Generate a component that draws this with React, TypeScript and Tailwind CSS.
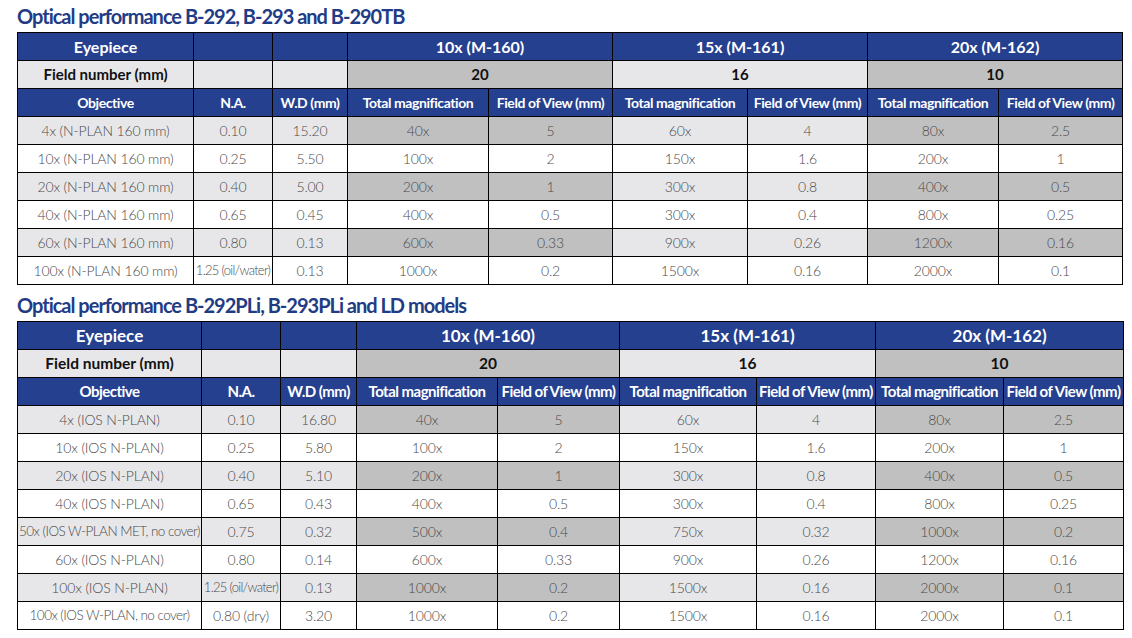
import React from "react";

type DataRow = {
  objective: string;
  na: string;
  wd: string;
  values: string[];
  shaded: boolean;
};

interface PerfTableProps {
  title: string;
  widths: number[];
  rows: DataRow[];
  big?: boolean;
}

const LIGHT = "bg-[#e7e7e9]";
const DARK = "bg-[#c0c0c0]";

const eyepieces = ["10x (M-160)", "15x (M-161)", "20x (M-162)"];
const fieldNumbers = ["20", "16", "10"];

// column shading in a shaded row: 3 lead columns light, then dark/light/dark pairs
const shadeFor = (col: number) => {
  if (col < 3) return LIGHT;
  if (col < 5) return DARK;
  if (col < 7) return LIGHT;
  return DARK;
};

// long texts are squeezed to fit their cell, as in the printed sheet
const sizeFor = (text: string) => {
  if (text.includes("oil/water")) return "text-[13px] tracking-[-0.055em]";
  if (text.length > 24) return "text-[13.5px] tracking-[-0.04em]";
  return "text-[14px] tracking-[-0.01em]";
};

const PerfTable: React.FC<PerfTableProps> = ({ title, widths, rows, big }) => {
  const head = big
    ? "border border-black bg-[#25408f] text-white font-bold text-center whitespace-nowrap text-[15px] tracking-[-0.035em]"
    : "border border-black bg-[#25408f] text-white font-bold text-center whitespace-nowrap text-[14px] tracking-[-0.03em]";
  const topHead = big
    ? "border border-black bg-[#25408f] text-white font-bold text-center whitespace-nowrap text-[17px]"
    : "border border-black bg-[#25408f] text-white font-bold text-center whitespace-nowrap text-[16px]";
  const field = big
    ? "border border-black text-center font-bold text-[15.5px] text-[#111]"
    : "border border-black text-center font-bold text-[15px] text-[#111]";
  const cell = "border border-black text-center whitespace-nowrap font-light text-[#4a4a4a]";

  return (
    <div>
      <h2 className="text-[#1f3c85] font-bold text-[20px] leading-[32px] h-[32px] tracking-[-0.05em] whitespace-nowrap">
        {title}
      </h2>
      <table className="table-fixed border-collapse w-full">
        <colgroup>
          {widths.map((w, i) => (
            <col key={i} style={{ width: w }} />
          ))}
        </colgroup>
        <tbody>
          <tr className="h-[28px]">
            <td className={topHead}>Eyepiece</td>
            <td className={topHead}></td>
            <td className={topHead}></td>
            {eyepieces.map((e) => (
              <td key={e} colSpan={2} className={topHead}>
                {e}
              </td>
            ))}
          </tr>
          <tr className="h-[28px]">
            <td className={`${field} ${LIGHT}`}>Field number (mm)</td>
            <td className={`border border-black ${LIGHT}`}></td>
            <td className={`border border-black ${LIGHT}`}></td>
            {fieldNumbers.map((f, i) => (
              <td key={f} colSpan={2} className={`${field} ${i === 1 ? LIGHT : DARK}`}>
                {f}
              </td>
            ))}
          </tr>
          <tr className="h-[28px]">
            <td className={head}>Objective</td>
            <td className={head}>N.A.</td>
            <td className={head}>W.D (mm)</td>
            {eyepieces.map((e) => (
              <React.Fragment key={e}>
                <td className={head}>Total magnification</td>
                <td className={head}>Field of View (mm)</td>
              </React.Fragment>
            ))}
          </tr>
          {rows.map((r) => {
            const cols = [r.objective, r.na, r.wd, ...r.values];
            return (
              <tr key={r.objective + r.na} className="h-[28px]">
                {cols.map((c, i) => (
                  <td
                    key={i}
                    className={`${cell} ${sizeFor(c)} ${r.shaded ? shadeFor(i) : "bg-white"}`}
                  >
                    {c}
                  </td>
                ))}
              </tr>
            );
          })}
        </tbody>
      </table>
    </div>
  );
};

const table1: DataRow[] = [
  { objective: "4x (N-PLAN 160 mm)", na: "0.10", wd: "15.20", values: ["40x", "5", "60x", "4", "80x", "2.5"], shaded: true },
  { objective: "10x (N-PLAN 160 mm)", na: "0.25", wd: "5.50", values: ["100x", "2", "150x", "1.6", "200x", "1"], shaded: false },
  { objective: "20x (N-PLAN 160 mm)", na: "0.40", wd: "5.00", values: ["200x", "1", "300x", "0.8", "400x", "0.5"], shaded: true },
  { objective: "40x (N-PLAN 160 mm)", na: "0.65", wd: "0.45", values: ["400x", "0.5", "300x", "0.4", "800x", "0.25"], shaded: false },
  { objective: "60x (N-PLAN 160 mm)", na: "0.80", wd: "0.13", values: ["600x", "0.33", "900x", "0.26", "1200x", "0.16"], shaded: true },
  { objective: "100x (N-PLAN 160 mm)", na: "1.25 (oil/water)", wd: "0.13", values: ["1000x", "0.2", "1500x", "0.16", "2000x", "0.1"], shaded: false },
];

const table2: DataRow[] = [
  { objective: "4x (IOS N-PLAN)", na: "0.10", wd: "16.80", values: ["40x", "5", "60x", "4", "80x", "2.5"], shaded: true },
  { objective: "10x (IOS N-PLAN)", na: "0.25", wd: "5.80", values: ["100x", "2", "150x", "1.6", "200x", "1"], shaded: false },
  { objective: "20x (IOS N-PLAN)", na: "0.40", wd: "5.10", values: ["200x", "1", "300x", "0.8", "400x", "0.5"], shaded: true },
  { objective: "40x (IOS N-PLAN)", na: "0.65", wd: "0.43", values: ["400x", "0.5", "300x", "0.4", "800x", "0.25"], shaded: false },
  { objective: "50x (IOS W-PLAN MET, no cover)", na: "0.75", wd: "0.32", values: ["500x", "0.4", "750x", "0.32", "1000x", "0.2"], shaded: true },
  { objective: "60x (IOS N-PLAN)", na: "0.80", wd: "0.14", values: ["600x", "0.33", "900x", "0.26", "1200x", "0.16"], shaded: false },
  { objective: "100x (IOS N-PLAN)", na: "1.25 (oil/water)", wd: "0.13", values: ["1000x", "0.2", "1500x", "0.16", "2000x", "0.1"], shaded: true },
  { objective: "100x (IOS W-PLAN, no cover)", na: "0.80 (dry)", wd: "3.20", values: ["1000x", "0.2", "1500x", "0.16", "2000x", "0.1"], shaded: false },
];

export default function App() {
  return (
    <div className="w-[1132px] h-[638px] bg-white pl-[17px] pr-[10px] font-['Lato',sans-serif]">
      <PerfTable
        title="Optical performance B-292, B-293 and B-290TB"
        widths={[176, 79, 75, 141, 124, 135, 120, 131, 124]}
        rows={table1}
      />
      <div className="h-[4px]" />
      <PerfTable
        title="Optical performance B-292PLi, B-293PLi and LD models"
        widths={[184, 79, 76, 141, 122, 137, 119, 128, 120]}
        rows={table2}
        big
      />
    </div>
  );
}
